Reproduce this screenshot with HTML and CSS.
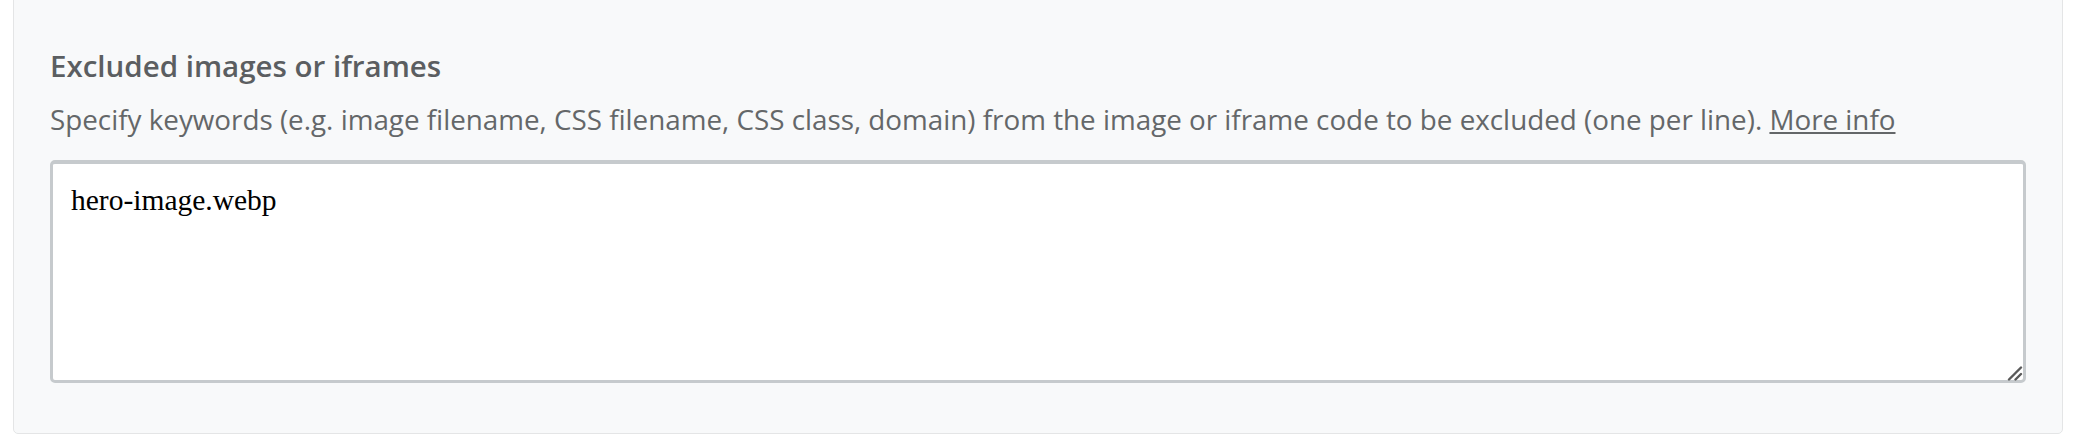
FILE: index.html
```html
<!DOCTYPE html>
<html lang="en">
<head>
  <meta charset="UTF-8" />
  <meta name="viewport" content="width=device-width, initial-scale=1.0"/>
  <title>Excluded images or iframes</title>
  <link rel="stylesheet" href="styles.css">
</head>
<body>
  <div class="card">
    <div class="field">
      <h3 class="field-title">Excluded images or iframes</h3>
      <p class="field-desc">Specify keywords (e.g. image filename, CSS filename, CSS class, domain) from the image or iframe code to be excluded (one per line). <a href="#" class="more-link">More info</a></p>
      <div class="input-wrap">
        <textarea class="keywords" rows="5">hero-image.webp</textarea>
        <svg class="grip" width="16" height="16" viewBox="0 0 16 16">
          <path d="M2 14.5 L14 2.5 M8.5 14.5 L14 9" stroke="#5a5a5a" stroke-width="2.4" stroke-linecap="round" fill="none"/>
        </svg>
      </div>
    </div>
  </div>
</body>
</html>
```

FILE: styles.css
```css
html, body {
  margin: 0;
  background: #ffffff;
}
body {
  font-family: "Open Sans", "Noto Sans", sans-serif;
  padding-left: 13px;
  padding-right: 15px;
}
.card {
  margin-top: -20px;
  background-color: #f8f9fa;
  border: 1px solid #e4e5e6;
  border-radius: 0 0 5px 5px;
  padding: 65px 36px 50px 36px;
}
.field-title {
  margin: 0;
  font-size: 29.5px;
  font-weight: 600;
  line-height: 40px;
  color: #5b5e61;
}
.field-desc {
  margin: 13px 0 21px 0;
  font-size: 27.8px;
  line-height: 40px;
  color: #646769;
}
.more-link {
  color: #646769;
  text-decoration: underline;
}
.input-wrap {
  position: relative;
}
.keywords {
  display: block;
  box-sizing: border-box;
  width: 100%;
  height: 223px;
  margin: 0;
  padding: 20px 18px;
  border: 3px solid #c6cacd;
  border-top-width: 4px;
  border-radius: 5px;
  background: #ffffff;
  font-family: "Liberation Serif", serif;
  font-size: 29.5px;
  line-height: 33px;
  color: #000000;
  resize: none;
  outline: none;
}
.grip {
  position: absolute;
  right: 3px;
  bottom: 2px;
}
```
